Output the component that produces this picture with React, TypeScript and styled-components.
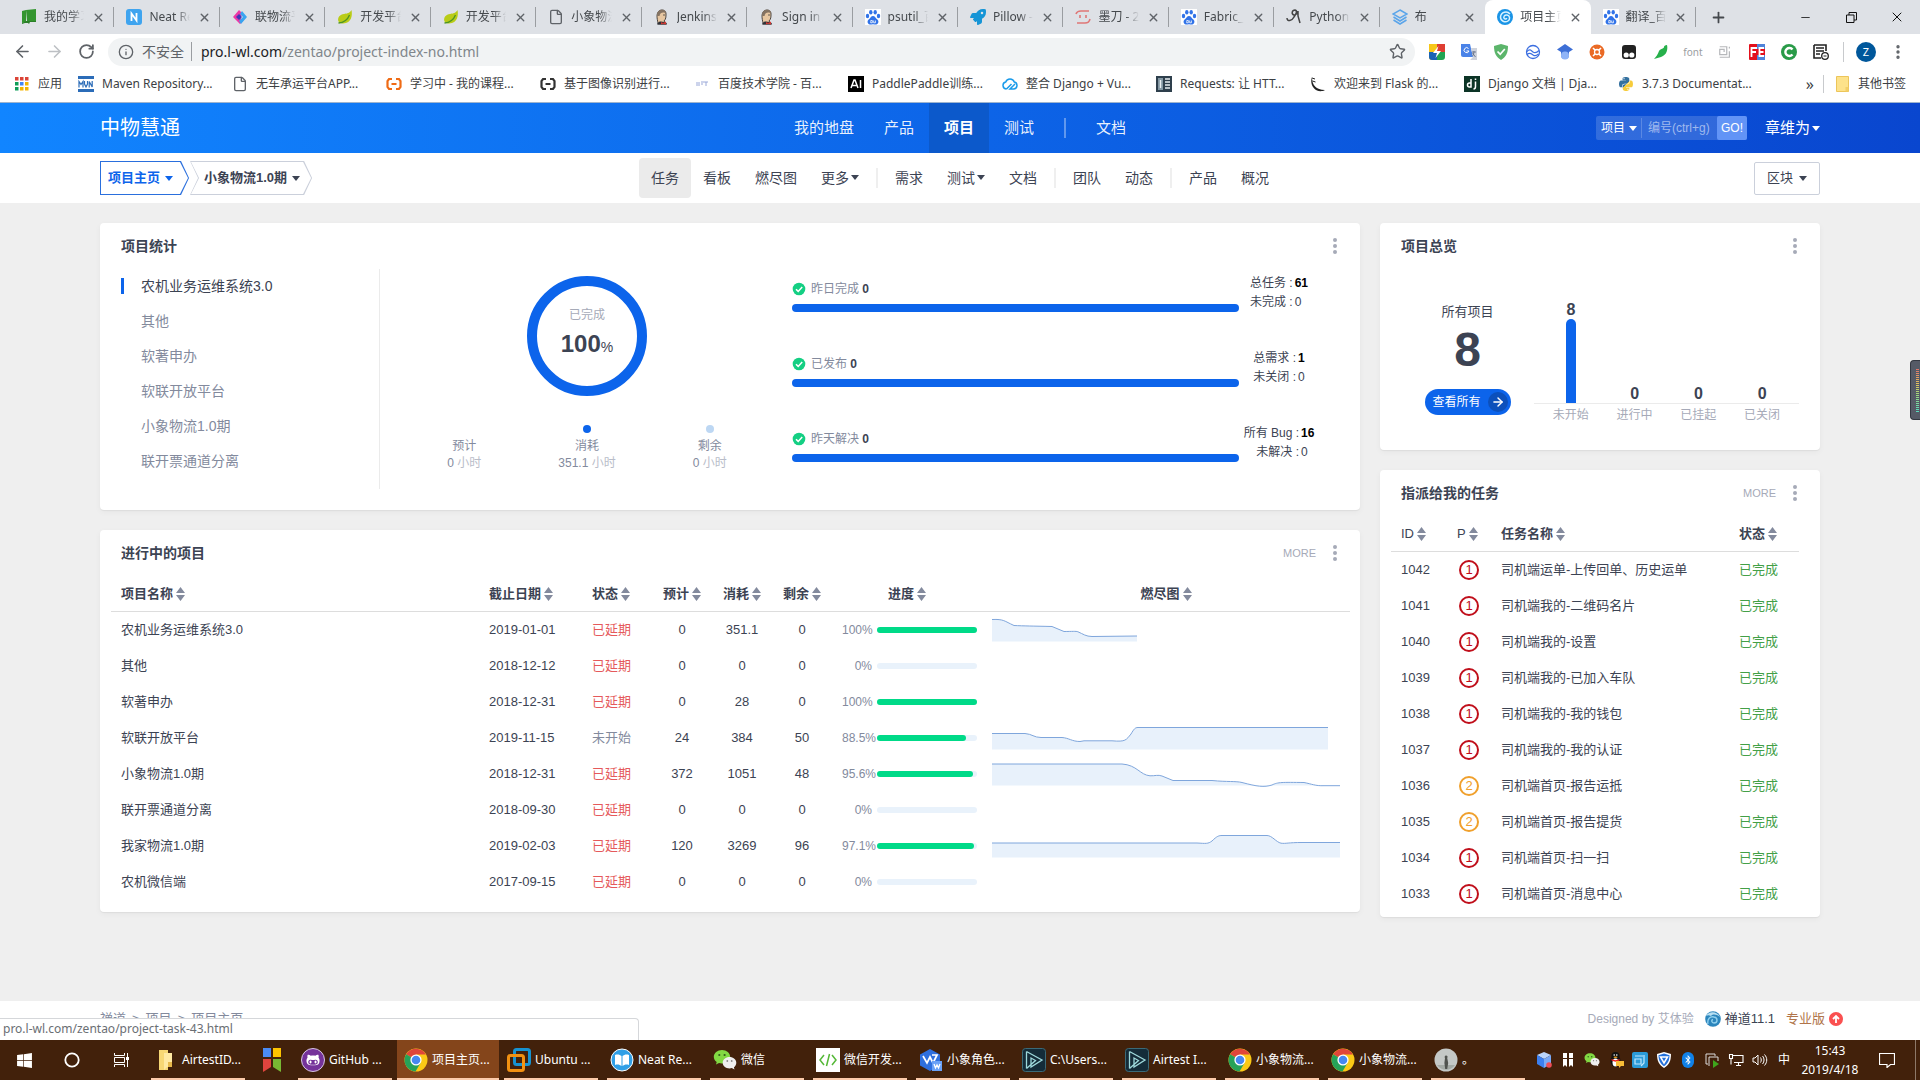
import React from "react";
import styled, { createGlobalStyle, css } from "styled-components";
import { ArrowLeft, ArrowRight, RotateCw, Info, Star, Plus, X, Minus, File, MoreVertical } from "lucide-react";
import { FaWindows, FaPython, FaBluetoothB, FaRocket, FaGithubAlt } from "react-icons/fa";

const uiFont = `"Noto Sans", "Noto Sans CJK SC", sans-serif`;
const pageFont = `"Liberation Sans", "Noto Sans CJK SC", sans-serif`;
const ink = "#3c4353";
const muted = "#838a9d";
const pale = "#a6aab8";
const blue = "#0c64eb";

const Global = createGlobalStyle`
  *, *::before, *::after { box-sizing: border-box; }
  body { margin: 0; background: #efefef; color: ${ink}; font-family: ${pageFont}; font-size: 13px; line-height: 20px; }
  button, input, select { font: inherit; color: inherit; background: none; border: 0; padding: 0; margin: 0; outline: 0; }
  button { cursor: pointer; }
  a { color: inherit; text-decoration: none; }
  svg { display: block; flex: none; }
  ul, h1, h2 { margin: 0; padding: 0; list-style: none; }
`;

const Screen = styled.div`
  min-height: 100vh;
  display: flex;
  flex-direction: column;
`;

/* ---------- browser frame ---------- */
const TabStrip = styled.div`
  display: flex;
  align-items: center;
  height: 34px;
  padding-left: 9px;
  background: #dee1e6;
  font-family: ${uiFont};
  font-size: 12px;
`;
const Tabs = styled.div`
  display: flex;
  flex: 1;
  min-width: 0;
  height: 100%;
`;
const Tab = styled.div<{ $active?: boolean; $line?: boolean }>`
  flex: 1 1 0;
  min-width: 0;
  display: flex;
  align-items: center;
  gap: 7px;
  height: 34px;
  padding: 0 9px 0 12px;
  color: #45494d;
  background: linear-gradient(#9a9da1, #9a9da1) right center / ${(p) => (p.$line ? "1px 20px" : "0 0")} no-repeat;
  ${(p) => p.$active && css`background: #fff; border-radius: 8px 8px 0 0;`}
`;
const TabTitle = styled.button`
  flex: 1;
  min-width: 0;
  overflow: hidden;
  white-space: nowrap;
  text-align: left;
  mask-image: linear-gradient(90deg, #000 65%, transparent 98%);
`;
const IconButton = styled.button`
  display: flex;
  align-items: center;
  justify-content: center;
  color: #5f6368;
`;
const WindowButtons = styled.div`
  display: flex;
  align-items: center;
  width: 224px;
  height: 34px;
  > button { color: #111; width: 46px; height: 34px; }
  > button:first-child { margin-right: 41px; color: #45494d; }
`;
const Toolbar = styled.div`
  display: flex;
  align-items: center;
  height: 35px;
  padding: 0 6px;
  background: #fff;
  font-family: ${uiFont};
  > button { width: 32px; height: 32px; }
`;
const Omnibox = styled.div`
  flex: 1;
  display: flex;
  align-items: center;
  height: 28px;
  margin: 0 6px;
  padding: 0 9px 0 10px;
  border-radius: 14px;
  background: #f1f3f4;
  color: #5f6368;
  font-size: 14px;
`;
const Unsafe = styled.span`
  padding: 0 7px 0 8px;
  margin-right: 9px;
  border-right: 1px solid #9a9da1;
  line-height: 19px;
`;
const Host = styled.label`color: #202124;`;
const PathInput = styled.input`
  flex: 1;
  min-width: 0;
  color: #80868b;
`;
const FontExt = styled.span`
  font-size: 10px;
  color: #9a9da1;
`;
const Rule = styled.span<{ $h: number; $gap?: number }>`
  width: 1px;
  height: ${(p) => p.$h}px;
  margin: 0 ${(p) => p.$gap ?? 0}px;
  background: #c8cacd;
  flex: none;
`;
const Avatar = styled.span`
  display: grid;
  place-items: center;
  width: 20px;
  height: 20px;
  border-radius: 50%;
  background: #00579b;
  color: #fff;
  font-size: 11px;
`;
const Bookmarks = styled.nav`
  display: flex;
  align-items: center;
  height: 34px;
  padding: 0 14px 3px;
  background: #fff;
  border-bottom: 1px solid #9db4cf;
  font-family: ${uiFont};
  font-size: 12px;
  color: #3c4043;
`;
const Bookmark = styled.a<{ $w?: number }>`
  display: flex;
  align-items: center;
  gap: 8px;
  flex: 0 0 ${(p) => (p.$w ? p.$w + "px" : "154px")};
  white-space: nowrap;
`;
const MoreMarks = styled.button`
  margin-left: auto;
  padding-right: 9px;
  font-size: 16px;
`;
const OtherMarks = styled.a`
  display: flex;
  align-items: center;
  gap: 8px;
  padding-left: 12px;
`;

/* ---------- product header ---------- */
const Viewport = styled.div`
  position: relative;
  flex: 1;
  display: flex;
  flex-direction: column;
`;
const Header = styled.header`
  display: grid;
  grid-template-columns: 1fr auto 1fr;
  align-items: center;
  height: 50px;
  padding: 0 100px;
  color: #fff;
  background: linear-gradient(90deg, #1185ff, #0d65e8 50%, #0946cf);
`;
const Logo = styled.h1`
  font-size: 20px;
  font-weight: 400;
  line-height: 28px;
`;
const MainNav = styled.nav`
  display: flex;
  align-items: center;
  font-size: 15px;
`;
const MainLink = styled.a<{ $on?: boolean }>`
  padding: 0 15px;
  line-height: 50px;
  color: rgba(255, 255, 255, 0.92);
  ${(p) => p.$on && css`background: #0c59cb; color: #fff; font-weight: 700;`}
`;
const NavRule = styled.span`
  width: 2px;
  height: 20px;
  margin: 0 15px;
  background: rgba(255, 255, 255, 0.35);
`;
const UserArea = styled.div`
  justify-self: end;
  display: flex;
  align-items: center;
  gap: 18px;
`;
const SearchBox = styled.form`
  display: flex;
  align-items: center;
  height: 24px;
  border-radius: 2px;
  background: rgba(255, 255, 255, 0.16);
  font-size: 12px;
`;
const SelectWrap = styled.label`
  display: flex;
  align-items: center;
  padding: 0 4px 0 5px;
  border-right: 1px solid rgba(255, 255, 255, 0.2);
`;
const Scope = styled.select`
  appearance: none;
  width: 28px;
`;
const NumberInput = styled.input`
  width: 75px;
  padding-left: 6px;
  &::placeholder { color: rgba(255, 255, 255, 0.55); }
`;
const GoButton = styled.button`
  width: 30px;
  height: 24px;
  background: #6294f6;
  border-radius: 2px;
`;
const Caret = styled.i`
  display: inline-block;
  flex: none;
  border: 4px solid transparent;
  border-top: 5px solid currentColor;
  border-bottom: 0;
`;
const UserButton = styled.button`
  display: flex;
  align-items: center;
  gap: 2px;
  font-size: 15px;
`;
const SubHeader = styled.div`
  display: grid;
  grid-template-columns: 1fr auto 1fr;
  align-items: center;
  height: 50px;
  padding: 0 100px;
  background: #fff;
`;
const Crumbs = styled.div`
  display: flex;
  gap: 1px;
`;
const notch = (on?: boolean) =>
  on
    ? "polygon(0 0, calc(100% - 8px) 0, 100% 50%, calc(100% - 8px) 100%, 0 100%)"
    : "polygon(0 0, calc(100% - 8px) 0, 100% 50%, calc(100% - 8px) 100%, 0 100%, 8px 50%)";
const CrumbButton = styled.button<{ $on?: boolean }>`
  position: relative;
  isolation: isolate;
  display: flex;
  align-items: center;
  gap: 5px;
  height: 34px;
  padding: ${(p) => (p.$on ? "0 16px 0 8px" : "0 12px 0 14px")};
  background: ${(p) => (p.$on ? "#2a6fdd" : "#cbd0db")};
  color: ${(p) => (p.$on ? blue : ink)};
  font-weight: 700;
  clip-path: ${(p) => notch(p.$on)};
  &::before {
    content: "";
    position: absolute;
    z-index: -1;
    inset: 1px;
    background: #fff;
    clip-path: ${(p) => notch(p.$on)};
  }
`;
const SubNav = styled.nav`
  display: flex;
  align-items: center;
  font-size: 14px;
`;
const SubLink = styled.a<{ $on?: boolean }>`
  display: flex;
  align-items: center;
  gap: 2px;
  height: 40px;
  padding: 0 12px 1px;
  border-radius: 4px;
  ${(p) => p.$on && css`background: #ebebeb;`}
`;
const SubRule = styled.span`
  width: 2px;
  height: 20px;
  margin: 0 5px;
  background: #efefef;
`;
const BlockButton = styled.button`
  justify-self: end;
  display: flex;
  align-items: center;
  gap: 6px;
  height: 33px;
  padding: 0 12px;
  border: 1px solid #cbd0db;
  border-radius: 2px;
`;

/* ---------- cards ---------- */
const Content = styled.main`
  flex: 1;
  display: grid;
  grid-template-columns: minmax(0, 1fr) 440px;
  align-items: start;
  gap: 20px;
  padding: 20px 100px;
`;
const Column = styled.div`
  display: grid;
  gap: 20px;
`;
const Card = styled.section<{ $bottom: number }>`
  padding-bottom: ${(p) => p.$bottom}px;
  background: #fff;
  border-radius: 4px;
  box-shadow: 0 1px 1px rgba(0, 0, 0, 0.05), 0 2px 6px rgba(0, 0, 0, 0.045);
`;
const CardHead = styled.div`
  display: flex;
  align-items: center;
  height: 46px;
  padding: 0 21px;
`;
const CardTitle = styled.h2`
  flex: 1;
  font-size: 14px;
`;
const MoreLink = styled.a`
  margin-right: 15px;
  font-size: 11px;
  color: ${pale};
`;
const DotsButton = styled.button`
  display: grid;
  gap: 2px;
  width: 8px;
  justify-items: center;
  i { width: 4px; height: 4px; border-radius: 50%; background: ${pale}; }
`;
const StatGrid = styled.div`
  display: grid;
  grid-template-columns: 260px minmax(0, 412fr) minmax(0, 548fr);
  margin: 0 20px;
`;
const ProjectList = styled.ul`
  height: 220px;
  border-right: 1px solid #ebebeb;
`;
const ProjectItem = styled.li<{ $on?: boolean }>`
  display: flex;
  align-items: center;
  height: 35px;
  padding-bottom: 2px;
  font-size: 14px;
  color: ${(p) => (p.$on ? ink : muted)};
  &::before {
    content: "";
    width: 3px;
    height: 16px;
    margin: 0 17px 0 1px;
    background: ${(p) => (p.$on ? blue : "transparent")};
  }
`;
const RingArea = styled.div`
  display: flex;
  flex-direction: column;
  align-items: center;
  padding: 7px 21px 0 23px;
`;
const Ring = styled.div`
  display: flex;
  flex-direction: column;
  align-items: center;
  width: 120px;
  height: 120px;
  padding-top: 20px;
  border: 10px solid ${blue};
  border-radius: 50%;
  font-size: 12px;
  line-height: 18px;
  color: ${pale};
  strong { font-size: 24px; line-height: 40px; color: ${ink}; }
  small { font-size: 14px; font-weight: 400; }
`;
const Legend = styled.div`
  display: grid;
  grid-template-columns: repeat(3, 1fr);
  width: 100%;
  margin-top: 29px;
`;
const LegendItem = styled.div<{ $dot?: string }>`
  display: flex;
  flex-direction: column;
  align-items: center;
  font-size: 12px;
  line-height: 17px;
  color: ${muted};
  &::before {
    content: "";
    width: 8px;
    height: 8px;
    margin-bottom: 5px;
    border-radius: 50%;
    background: ${(p) => p.$dot ?? "transparent"};
  }
  small { font-size: 12px; color: #b9bdc9; }
`;
const Meters = styled.div`
  display: grid;
  align-content: start;
  gap: 37px;
  padding: 5px 21px 0 0;
  font-size: 12px;
`;
const Meter = styled.div`
  display: flex;
  align-items: flex-end;
  height: 38px;
`;
const MeterMain = styled.div`flex: 1;`;
const MeterLabel = styled.div`
  display: flex;
  align-items: center;
  gap: 5px;
  margin-bottom: 6px;
  line-height: 18px;
  color: ${muted};
  b { color: ${ink}; }
`;
const MeterBar = styled.div`
  height: 8px;
  border-radius: 4px;
  background: ${blue};
`;
const Totals = styled.div`
  display: grid;
  grid-template-columns: auto auto;
  justify-content: center;
  column-gap: 2px;
  width: 80px;
  line-height: 19px;
  white-space: nowrap;
  span:nth-child(odd) { text-align: right; }
  b { color: #000; }
`;

/* ---------- tables ---------- */
const Table = styled.table<{ $right: number }>`
  width: calc(100% - ${(p) => p.$right + 11}px);
  margin: 0 ${(p) => p.$right}px 0 11px;
  table-layout: fixed;
  border-collapse: separate;
  border-spacing: 0;
`;
const Th = styled.th<{ $w?: number; $c?: boolean }>`
  width: ${(p) => (p.$w ? p.$w + "px" : "auto")};
  height: 36px;
  padding: 0;
  padding-left: ${(p) => (p.$c ? 0 : 10)}px;
  border-bottom: 1px solid #ddd;
  text-align: ${(p) => (p.$c ? "center" : "left")};
  white-space: nowrap;
`;
const ThButton = styled.button<{ $light?: boolean }>`
  display: inline-flex;
  align-items: center;
  gap: 3px;
  vertical-align: middle;
  font-weight: ${(p) => (p.$light ? 400 : 700)};
`;
const Td = styled.td<{ $c?: boolean; $color?: string }>`
  height: 36px;
  padding: 0;
  padding-left: ${(p) => (p.$c ? 0 : 10)}px;
  text-align: ${(p) => (p.$c ? "center" : "left")};
  color: ${(p) => p.$color ?? ink};
  white-space: nowrap;
`;
const Progress = styled.div`
  display: flex;
  align-items: center;
  gap: 5px;
  font-size: 12px;
  color: ${muted};
  > span { width: 30px; text-align: right; }
`;
const Track = styled.div`
  width: 100px;
  height: 6px;
  border-radius: 3px;
  background: #e9f2fb;
`;
const Fill = styled.div`
  height: 6px;
  border-radius: 3px;
  background: #00da88;
`;
const Priority = styled.span<{ $level: number }>`
  display: grid;
  place-items: center;
  width: 20px;
  height: 20px;
  margin-left: 2px;
  border: 2px solid ${(p) => (p.$level === 1 ? "#c00f1b" : "#f0a02c")};
  border-radius: 50%;
  color: ${(p) => (p.$level === 1 ? "#c00f1b" : "#f0a02c")};
  line-height: 16px;
`;

/* ---------- overview ---------- */
const Overview = styled.div`
  display: flex;
  padding: 30px 21px 0;
`;
const Summary = styled.div`
  display: flex;
  flex-direction: column;
  align-items: center;
  width: 133px;
  padding-top: 3px;
  strong { font-size: 48px; line-height: 56px; margin-bottom: 11px; }
`;
const ViewAll = styled.a`
  display: flex;
  align-items: center;
  justify-content: space-between;
  width: 86px;
  height: 26px;
  padding: 0 3px 0 8px;
  border-radius: 13px;
  background: ${blue};
  color: #fff;
  font-size: 12px;
  span { display: grid; place-items: center; width: 20px; height: 20px; border-radius: 50%; background: #0c50bb; }
`;
const BarChart = styled.div`flex: 1;`;
const Plot = styled.div`
  display: grid;
  grid-template-columns: repeat(4, 1fr);
  height: 105px;
  padding: 0 5px;
  border-bottom: 1px solid #ebebeb;
`;
const BarCell = styled.div`
  display: flex;
  flex-direction: column;
  align-items: center;
  justify-content: flex-end;
  font-size: 16px;
  font-weight: 700;
  line-height: 18px;
`;
const Bar = styled.div`
  width: 10px;
  border-radius: 5px 5px 0 0;
  background: ${blue};
`;
const BarLabels = styled.div`
  display: grid;
  grid-template-columns: repeat(4, 1fr);
  padding: 0 5px;
  font-size: 12px;
  line-height: 22px;
  text-align: center;
  color: ${pale};
`;
const VolumeWidget = styled.div`
  position: absolute;
  right: 0;
  top: 257px;
  width: 10px;
  height: 60px;
  padding: 8px 1px 7px 5px;
  border: 1px solid #343841;
  border-right: 0;
  border-radius: 4px 0 0 4px;
  background: #555a66;
  &::before {
    content: "";
    display: block;
    height: 100%;
    background: repeating-linear-gradient(transparent 0 1px, #555a66 1px 2px), linear-gradient(#e0736b, #e3c35d 35%, #9fda7c 60%, #55dcc0);
  }
`;

/* ---------- footer ---------- */
const Footer = styled.footer`
  display: flex;
  align-items: center;
  justify-content: space-between;
  height: 39px;
  padding: 0 77px 3px 100px;
  background: #fff;
`;
const FootTrail = styled.nav`
  display: flex;
  gap: 6px;
  color: ${muted};
`;
const Credits = styled.div`
  display: flex;
  align-items: center;
  gap: 11px;
  color: ${pale};
  small { font-size: 12px; }
  a { display: flex; align-items: center; gap: 4px; color: ${ink}; }
  a:last-child { color: #b0744a; }
`;
const StatusBubble = styled.div`
  position: absolute;
  left: 0;
  bottom: 0;
  width: 639px;
  height: 22px;
  padding-left: 3px;
  border: 1px solid #d5d7da;
  border-width: 1px 1px 0 0;
  border-radius: 0 4px 0 0;
  background: #fff;
  color: #6a6e73;
  font-family: ${uiFont};
  font-size: 12px;
`;

/* ---------- task bar ---------- */
const Taskbar = styled.div`
  display: flex;
  align-items: center;
  height: 40px;
  background: #42210b;
  color: #fff;
  font-family: ${uiFont};
  font-size: 12px;
`;
const PlainTask = styled.button<{ $w: number }>`
  display: grid;
  place-items: center;
  width: ${(p) => p.$w}px;
  height: 40px;
`;
const TaskButton = styled.button<{ $on?: boolean }>`
  display: flex;
  align-items: center;
  gap: 4px;
  width: 103px;
  height: 40px;
  padding: 0 4px 0 7px;
  overflow: hidden;
  white-space: nowrap;
  background:
    linear-gradient(#fccbab, #fccbab) ${(p) => (p.$on ? "0" : "4px")} bottom / ${(p) => (p.$on ? "102px" : "94px")} 2px no-repeat,
    linear-gradient(#84451b, #84451b) 0 0 / ${(p) => (p.$on ? "102px" : "0")} 100% no-repeat;
`;
const Tray = styled.div`
  display: flex;
  align-items: center;
  margin-left: auto;
`;
const TrayButton = styled.button`
  display: grid;
  place-items: center;
  width: 24px;
  height: 40px;
`;
const Clock = styled.time`
  width: 68px;
  text-align: center;
  line-height: 19px;
`;
const Notify = styled.button`
  display: grid;
  place-items: center;
  width: 46px;
  height: 40px;
`;
const Peek = styled.span`
  width: 5px;
  height: 40px;
  margin-left: 5px;
  border-left: 1px solid #8d7868;
`;

/* ---------- drawings ---------- */
const Svg = ({ s = 16, v = 16, children }: { s?: number; v?: number; children: React.ReactNode }) => (
  <svg width={s} height={s} viewBox={`0 0 ${v} ${v}`} fill="none" aria-hidden="true">{children}</svg>
);
const TwoTone = styled(FaPython)`
  && path { fill: url(#snake); }
`;
const Defs = styled.svg`
  position: absolute;
`;
const Spring = () => <Svg><path d="M14.5 1C15.5 6 15 14 6 14.5c-2 .2-4-.8-4.7-2.4C.4 8.400 3 5.500 7 5c3-.4 6-1 7.500-4Z" fill="#b9cc17" /><path d="M1.500 14c5-.4 9-3 11-8" stroke="#4d9423" strokeWidth="1.300" /></Svg>;
const Jenkins = () => <Svg><path d="M4 14c-1-5-2-9 1-12 3-2 7-1 7 3 0 3 0 5-2 7l2 3H4Z" fill="#e7c6a0" stroke="#3a3430" strokeWidth=".9" /><path d="M3.500 7C2.500 3 5 .6 8 .8c3 0 4.500 2 4.200 4C10 2.500 6 3 5.500 7Z" fill="#857362" /><path d="M3 15.500c1-2.500 2.500-3 4-3l3 .5c2 .3 3 1 3 2.500Z" fill="#2f3138" /><path d="m7 13 2 1 3-1.500v3L9 14.700l-2 .8Z" fill="#d33833" /><circle cx="10" cy="6" r=".7" fill="#333" /></Svg>;
const Baidu = () => <Svg><path d="M0 0h16v16H0z" fill="#fff" /><g fill="#3173e8"><ellipse cx="2.500" cy="7" rx="1.700" ry="2.200" /><ellipse cx="5.800" cy="3.300" rx="1.700" ry="2.300" /><ellipse cx="10.200" cy="3.300" rx="1.700" ry="2.300" /><ellipse cx="13.500" cy="7" rx="1.700" ry="2.200" /><path d="M8 7c2 0 2.600 2.200 4.400 3.600 1.700 1.500 1.200 4.600-1.200 4.900-1.200.1-2-.3-3.200-.3s-2 .4-3.200.3c-2.400-.3-2.900-3.400-1.200-4.900C5.400 9.200 6 7 8 7Z" /></g><path d="M5.500 11.500h1.800v2.300H5.700v-1.600m3-.7v2.300h1.700v-2.300" stroke="#fff" strokeWidth=".8" /></Svg>;
const Chrome = ({ s = 24 }: { s?: number }) => <Svg s={s} v={24}><circle cx="12" cy="12" r="11.500" fill="#fbc916" /><path d="M12 12 2.100 6.200A11.500 11.500 0 0 1 21.900 6.500H12Z" fill="#e0463a" /><path d="M2.100 6.200A11.500 11.500 0 0 0 11.500 23.500l5-8.500-4.500-3Z" fill="#26a259" /><circle cx="12" cy="12" r="5.600" fill="#fff" /><circle cx="12" cy="12" r="4.300" fill="#4688f1" /></Svg>;
const ZenIcon = () => <Svg><circle cx="8" cy="8" r="8" fill="#1a94e6" /><path d="M13 5C10 1.500 4 3 3.500 8c0 4 4.500 6 7.500 4 2.500-1.700 2-5.500-1-6-2.500-.3-4 2-2.700 3.600.8.900 2.200.5 2.400-.6" stroke="#d8f2ff" strokeWidth="1.500" /></Svg>;
const ZenBall = () => <Svg><circle cx="8" cy="8" r="7.800" fill="#2c86bd" /><path d="M1 5C4 0 12 0 15 6c-4-3-7-3-9-1-2-1-3-1-5 0Z" fill="#b9dff1" /><path d="M3 13c-1-5 2-8 6-7 4 .5 4 6 0 6-2.500 0-3-3-1-3.500" stroke="#8fd0ee" strokeWidth="1.400" /></Svg>;
const PageIcon = () => <File size={16} color="#5f6368" strokeWidth={2} />;
const Bracket = ({ c }: { c: string }) => <Svg><path d="M6 3H3L1.500 5v6L3 13h3M10 3h3l1.500 2v6L13 13h-3M5.500 8h5" stroke={c} strokeWidth="2.200" /></Svg>;
const Wechat = ({ s = 24 }: { s?: number }) => <Svg s={s} v={24}><path d="M9 2C4.500 2 .8 5 .8 8.800c0 2.100 1.100 3.900 2.900 5.200L3 16.500l3-1.500c1 .3 2 .4 3 .4 4.500 0 8.200-2.900 8.200-6.600S13.500 2 9 2Z" fill="#82d943" /><path d="M16.500 9c-3.800 0-6.800 2.500-6.800 5.700s3 5.700 6.800 5.700c.8 0 1.600-.1 2.300-.3l2.700 1.400-.6-2.300c1.500-1 2.400-2.700 2.400-4.500C23.300 11.500 20.300 9 16.500 9Z" fill="#efefef" /><g fill="#335c1a"><circle cx="6.300" cy="7" r="1.100" /><circle cx="11.600" cy="7" r="1.100" /></g><g fill="#888"><circle cx="14.300" cy="13" r=".9" /><circle cx="18.700" cy="13" r=".9" /></g></Svg>;
const Airtest = () => <Svg s={24} v={24}><rect x=".5" y=".5" width="23" height="23" rx="3" fill="#142c39" stroke="#3b6a78" /><path d="M4.500 3.500v17M4.500 3.500l15.500 8.500-11 7v-9l4.500 2.500-9 8" stroke="#9ed9dc" strokeWidth="1.300" /></Svg>;
const Folder = () => <Svg s={24} v={24}><path d="M5 2h9v20H5z" fill="#f7d774" /><path d="M10 5h8v14h-5l-3 3z" fill="#ffe9a2" /><path d="M14 14h4v5h-4z" fill="#e6b84b" /></Svg>;
const SortIcon = () => <svg width="9" height="14" viewBox="0 0 9 14" aria-hidden="true"><path d="M0 6 4.500 0 9 6ZM0 8h9l-4.500 6Z" fill={muted} /></svg>;
const Check = () => <svg width="14" height="14" viewBox="0 0 14 14" aria-hidden="true"><circle cx="7" cy="7" r="6.300" fill="#14cf83" /><path d="m4 7.200 2.200 2.200L10.200 5" fill="none" stroke="#fff" strokeWidth="1.500" /></svg>;

const tabs: { t: string; i: React.ReactNode }[] = [
  { t: "我的学习", i: <Svg><path d="m1 2 4-1v12l-4 1zM5 1l10-1v12H6Z" fill="#33952f" /><path d="m1 14 4-2h10v1H9l-1 2-1-1H4l-3 1z" fill="#2b7f28" /></Svg> },
  { t: "Neat Re", i: <Svg><rect width="16" height="16" rx="3" fill="#3fa4ef" /><path d="M5.500 12V4.500l5 7V4" stroke="#fff" strokeWidth="1.800" /></Svg> },
  { t: "联物流平", i: <Svg><path d="m7 1 4 4-3 3 3 4-3 3-7-7Z" fill="#ec38a5" /><path d="m10 2 5 6-6 7-2-3 4-4-3-3Z" fill="#3aa4f0" /><path d="m4 8 3-3 3 3-3 3Z" fill="#4037b8" /></Svg> },
  { t: "开发平台", i: <Spring /> },
  { t: "开发平台", i: <Spring /> },
  { t: "小象物流", i: <PageIcon /> },
  { t: "Jenkins", i: <Jenkins /> },
  { t: "Sign in [", i: <Jenkins /> },
  { t: "psutil_百", i: <Baidu /> },
  { t: "Pillow - P", i: <FaRocket size={16} color="#1695d6" /> },
  { t: "墨刀 - 2", i: <Svg><path d="M1 5c1-3 3-3 5-3h8M15 10c-1 4-3 4-5 4H2" stroke="#df7777" strokeWidth="1.600" /><path d="M5 6v3M11 6v3" stroke="#df7777" strokeWidth="1.600" /></Svg> },
  { t: "Fabric_百", i: <Baidu /> },
  { t: "Python l", i: <Svg><path d="M1 9c0 4 5 3 7-1 2-3 4-6 1-7-3 0-4 4-1 5 2 0 4-2 4-4v5l2 7" stroke="#444" strokeWidth="1.500" /></Svg> },
  { t: "布", i: <Svg><path d="m8 1 7 4-7 4-7-4ZM1.500 8 8 12l6.500-4M1.500 11 8 15l6.500-4" stroke="#5ba5ea" strokeWidth="1.500" /></Svg> },
  { t: "项目主页", i: <ZenIcon /> },
  { t: "翻译_百", i: <Baidu /> },
];

const extensions: React.ReactNode[] = [
  <Svg><path d="M0 0h8v16H3a3 3 0 0 1-3-3z" fill="#f7c719" /><path d="M8 0h8v8H8z" fill="#df3e32" /><path d="M0 8h8v8H3a3 3 0 0 1-3-3z" fill="#1a63b5" /><path d="M8 8h8v5a3 3 0 0 1-3 3H8z" fill="#21a453" /><path d="M9.500 2 4 9h4l-1.500 5L12 7H8Z" fill="#fff" /></Svg>,
  <Svg><path d="M0 0h9l3 13H2a2 2 0 0 1-2-2z" fill="#4a83e8" /><path d="M10 4h6v12H9l3-3z" fill="#cfd3dc" /><path d="M7.500 4.500A2.500 2.500 0 1 0 8 7H5.500" stroke="#fff" /><path d="M11 8h4M13 7c0 3-1 4-1.500 5m0-3 3 4" stroke="#5b6780" strokeWidth=".8" /></Svg>,
  <Svg><path d="m8 0 7 2c0 7-2 11-7 14C3 13 1 9 1 2Z" fill="#5cb56b" /><path d="m4.500 7.500 2.700 2.700L11.800 5" stroke="#fff" strokeWidth="1.700" /></Svg>,
  <Svg><circle cx="8" cy="8" r="6.500" stroke="#3b6ee0" strokeWidth="1.300" /><path d="M2 7.500C5 4 6.500 7 8 8s3.500 1 6-1.500M2 10.500C5 8 6.500 10 8 11s3.500 1 5-1" stroke="#3b6ee0" strokeWidth="1.200" /></Svg>,
  <Svg><path d="m8 0 8 5.500L12 8v3a4 4 0 0 1-8 0V8L0 5.500Z" fill="#3d6fd6" /><circle cx="8" cy="11.500" r="4" fill="#8fb4f7" /></Svg>,
  <Svg><circle cx="8" cy="8" r="7.500" fill="#ea6a25" /><circle cx="8" cy="8" r="2.500" stroke="#fff" strokeWidth="1.300" /><path d="m4 4 2 2m4 4 2 2m0-8-2 2m-4 4-2 2" stroke="#fff" strokeWidth="1.600" /></Svg>,
  <Svg><rect x="1" y="1" width="14" height="14" rx="3" fill="#222" /><circle cx="5.200" cy="11" r="2.600" fill="#fff" /><circle cx="10.800" cy="11" r="2.600" fill="#fff" /></Svg>,
  <Svg><path d="M14 1c1 4 0 10-6 12l-7 2c2-2 4-5 5-8 2-3 5-2 5-4 0-1 1-2 3-2Z" fill="#27b04b" /></Svg>,
  <FontExt>font</FontExt>,
  <Svg s={14}><path d="M2 2h8v9H2V5h5v3M13 2v2m0 3v7H2" stroke="#b6b8bb" strokeWidth="1.400" /></Svg>,
  <Svg><rect width="16" height="16" rx="1" fill="#e3101c" /><path d="M8 0h8v5H8zM8 11h8v5H8z" fill="#4f83d9" /><path d="M2.500 13V4H8M2.500 8H7M15 4h-4.500v8H15m-4.500-4h4" stroke="#fff" strokeWidth="1.800" /></Svg>,
  <Svg><circle cx="8" cy="8" r="8" fill="#299b48" /><path d="M11.500 5.500a4 4 0 1 0 0 5" stroke="#fff" strokeWidth="2.400" /></Svg>,
  <Svg><path d="M1 1h12v6M1 1v13h7M3 4h8M3 7h8M3 10h4" stroke="#222" strokeWidth="1.600" /><circle cx="12" cy="12" r="3.300" stroke="#222" strokeWidth="1.300" /><path d="M10.500 12h3" stroke="#222" /></Svg>,
];

const bookmarks: { t: string; i: React.ReactNode }[] = [
  { t: "Maven Repository...", i: <Svg><path d="M0 0h16v3H0zM0 13h16v3H0z" fill="#2b6cb8" /><path d="M1 11.500v-6l2 3 2-3v6M6.500 5v3l1.500 3 1.500-3V5m1.700 6.500V5.500l3 5.500V5" stroke="#2b6cb8" strokeWidth="1.200" /></Svg> },
  { t: "无车承运平台APP...", i: <PageIcon /> },
  { t: "学习中 - 我的课程...", i: <Bracket c="#ef6b15" /> },
  { t: "基于图像识别进行...", i: <Bracket c="#333" /> },
  { t: "百度技术学院 - 百...", i: <Svg><path d="M3 6v4M5 6v4M7 6h3M7 8h2M12 6v4M10 6h4" stroke="#9aa8d8" /></Svg> },
  { t: "PaddlePaddle训练...", i: <Svg><path d="M0 0h16v16H0z" fill="#000" /><path d="m3 12 3-8h1l3 8M4 9.500h5M12.500 4v8" stroke="#fff" strokeWidth="1.500" /></Svg> },
  { t: "整合 Django + Vu...", i: <Svg><path d="M4.500 13a3.500 3.500 0 0 1-.8-6.900 4.500 4.500 0 0 1 8.600 0 3.500 3.500 0 0 1-.8 6.900H8l5-5M4.500 13l5-5" stroke="#1a9bea" strokeWidth="1.500" /></Svg> },
  { t: "Requests: 让 HTT...", i: <Svg><path d="M0 0h16v16H0z" fill="#2e3f4c" /><path d="M2 2h5v12H2z" fill="#8397a3" /><path d="M9 3h5M9 6h5M9 9h5M9 12h5M4.500 4v8" stroke="#e8eef1" strokeWidth="1.400" /></Svg> },
  { t: "欢迎来到 Flask 的...", i: <Svg><path d="M2 1c0 8 4 13 13 13-2 1.500-6 1.500-8 .5C2 12 0 6 2 1Z" fill="#222" /><path d="m2 2 3 1M2.500 5l3 1" stroke="#222" /></Svg> },
  { t: "Django 文档 | Dja...", i: <Svg><path d="M0 0h16v16H0z" fill="#0c3426" /><path d="M7 3v8H5.500a2 2 0 1 1 0-4H7M11.500 5.500v5c0 2-1 2.500-2 2.500M11.500 2.500V4" stroke="#fff" strokeWidth="1.500" /></Svg> },
  { t: "3.7.3 Documentat...", i: <TwoTone size={16} /> },
];

const projects = [
  { n: "农机业务运维系统3.0", d: "2019-01-01", late: true, e: "0", c: "351.1", l: "0", p: 100, w: 145, y: "M0 7.500C12 7 12 9 22 13.500C32 14 40 14 60 14.500L72 19.500C80 19.500 84 19 86 19.800C91 22 94 24.500 100 24.500L145 24" },
  { n: "其他", d: "2018-12-12", late: true, e: "0", c: "0", l: "0", p: 0 },
  { n: "软著申办", d: "2018-12-31", late: true, e: "0", c: "28", l: "0", p: 100 },
  { n: "软联开放平台", d: "2019-11-15", late: false, e: "24", c: "384", l: "50", p: 88.5, w: 336, y: "M0 13.500H33C40 14 42 17.500 49 17.500H70C77 18 80 21.500 88 21.500L92 20.800H120C134 22 134 20 139 14C142 9 143 7.500 146 7.500H336" },
  { n: "小象物流1.0期", d: "2018-12-31", late: true, e: "372", c: "1051", l: "48", p: 95.6, w: 348, y: "M0 8H130C145 9 148 19 158 19.800C163 20 166 18.500 170 20L181 24.500H220C235 26 244 25 250 26.500C265 30.500 272 31.500 280 29C286 26 290 26.300 312 26.500C320 28 323 30 332 29.700H348" },
  { n: "联开票通道分离", d: "2018-09-30", late: true, e: "0", c: "0", l: "0", p: 0 },
  { n: "我家物流1.0期", d: "2019-02-03", late: true, e: "120", c: "3269", l: "96", p: 97.1, w: 348, y: "M0 15H205C214 15.500 216 16 220 13C225 8 227 7.500 230 7.500H275C280 7.500 284 14 289 15.200C294 15.800 296 14.500 310 14.500H348" },
  { n: "农机微信端", d: "2017-09-15", late: true, e: "0", c: "0", l: "0", p: 0 },
];

const tasks: [number, number, string][] = [
  [1042, 1, "司机端运单-上传回单、历史运单"],
  [1041, 1, "司机端我的-二维码名片"],
  [1040, 1, "司机端我的-设置"],
  [1039, 1, "司机端我的-已加入车队"],
  [1038, 1, "司机端我的-我的钱包"],
  [1037, 1, "司机端我的-我的认证"],
  [1036, 2, "司机端首页-报告运抵"],
  [1035, 2, "司机端首页-报告提货"],
  [1034, 1, "司机端首页-扫一扫"],
  [1033, 1, "司机端首页-消息中心"],
];

const meters = [
  { k: "昨日完成", a: "总任务 :", av: "61", b: "未完成 :" },
  { k: "已发布", a: "总需求 :", av: "1", b: "未关闭 :" },
  { k: "昨天解决", a: "所有 Bug :", av: "16", b: "未解决 :" },
];

const overview = [
  { label: "未开始", value: 8 },
  { label: "进行中", value: 0 },
  { label: "已挂起", value: 0 },
  { label: "已关闭", value: 0 },
];

const running: { t: string; i: React.ReactNode; on?: boolean }[] = [
  { t: "GitHub ...", i: <Svg s={24} v={24}><circle cx="12" cy="12" r="11.500" fill="#75329a" stroke="#d7c7e2" /><g transform="translate(5 5)"><FaGithubAlt size={14} color="#fff" /></g></Svg> },
  { t: "项目主页...", i: <Chrome />, on: true },
  { t: "Ubuntu ...", i: <Svg s={24} v={24}><rect x="7.500" y="1.500" width="15" height="15" rx="2" stroke="#1793d1" strokeWidth="3" /><rect x="1.500" y="7.500" width="15" height="15" rx="2" stroke="#f29111" strokeWidth="3" /></Svg> },
  { t: "Neat Re...", i: <Svg s={24} v={24}><circle cx="12" cy="12" r="11" fill="#2f9fe6" stroke="#fff" /><path d="M5 7c3-1 5 0 6.500 1v10C10 17 8 16 5 17Zm14 0c-3-1-5 0-6.500 1v10c1.500-1 3.500-2 6.500-1Z" fill="#fff" /></Svg> },
  { t: "微信", i: <Wechat /> },
  { t: "微信开发...", i: <Svg s={24} v={24}><path d="M0 0h24v24H0z" fill="#fff" /><path d="m8 7-4 5 4 5m8-10 4 5-4 5m-2.500-11-3 12" stroke="#55b837" strokeWidth="1.500" /></Svg> },
  { t: "小象角色...", i: <Svg s={24} v={24}><path d="m11 1 10 5.500v11L11 23 1 17.500v-11Z" fill="#2e6fde" /><path d="m4 8 4 7 3-6 3 6 4-8h-5" stroke="#fff" strokeWidth="1.700" /><path d="M13 13h10v10H13z" fill="#6aa1f7" /><path d="m15 16 1.500 4 1.500-3 1.500 3 1.500-4" stroke="#fff" strokeWidth="1.300" /></Svg> },
  { t: "C:\\Users...", i: <Airtest /> },
  { t: "Airtest I...", i: <Airtest /> },
  { t: "小象物流...", i: <Chrome /> },
  { t: "小象物流...", i: <Chrome /> },
  { t: "。", i: <Svg s={24} v={24}><circle cx="12" cy="12" r="11.500" fill="#c4c8c6" /><path d="M3 17h18a11 11 0 0 1-18 0Z" fill="#a4aaa5" /><path d="M12 7.500a1.500 1.500 0 0 1 1.200 2.500l1 5-1 6h-2l-.8-6 .6-5A1.500 1.500 0 0 1 12 7.500Z" fill="#50534f" /></Svg> },
];

const tray: React.ReactNode[] = [
  <Svg><path d="m8 0 7 3-7 4-7-4Z" fill="#bcd5fa" /><path d="m1 3 7 4v9l-7-4Z" fill="#3c7ff0" /><path d="m15 3-7 4v9l7-4Z" fill="#7aa9f6" /><circle cx="13" cy="13" r="2.800" fill="#ef4d56" /></Svg>,
  <Svg><path d="M3 1h4v5H3zM9 1h4v5H9zM3 7h4v8l-2-2-2 2zM9 7h4v8l-2-2-2 2z" fill="#fff" /></Svg>,
  <Wechat s={16} />,
  <Svg><ellipse cx="7.500" cy="9" rx="5" ry="6" fill="#111" /><circle cx="7.500" cy="4" r="4" fill="#111" /><ellipse cx="7.500" cy="10.500" rx="3" ry="4" fill="#fff" /><path d="M3.500 7c3 1.500 5 1.500 8 0v1.500c-3 1.500-5 1.500-8 0Z" fill="#e22" /><ellipse cx="7.500" cy="5.200" rx="2" ry=".8" fill="#f6a21b" /><path d="M8 9h8v5h-3l-2 2v-2H8z" fill="#f8bd37" /><circle cx="6.200" cy="3" r=".8" fill="#fff" /><circle cx="8.800" cy="3" r=".8" fill="#fff" /></Svg>,
  <Svg><rect width="16" height="16" rx="2" fill="#2b9bd7" /><path d="M3 4h8M3 7h6v5H3zM12 3v8l-3 3" stroke="#bfe8ff" strokeWidth="1.200" /></Svg>,
  <Svg><path d="m8 0 7 2c0 7-2 11-7 14C3 13 1 9 1 2Z" fill="#fff" /><path d="m8 1.500 5.500 1.700C13.500 8 12 11.500 8 14.200 4 11.500 2.500 8 2.500 3.200Z" fill="#2370db" /><path d="M4.500 5h7L8 11Z" stroke="#fff" strokeWidth="1.500" /></Svg>,
  <Svg><rect x="2" width="12" height="16" rx="6" fill="#1081e8" /><g transform="translate(3 3)"><FaBluetoothB size={10} color="#fff" /></g></Svg>,
  <Svg><path d="M4 12H2V2h9v2M5 14V5h9v4" stroke="#ddd" /><path d="m9 8 6 4-6 4Z" fill="#3fa51c" /></Svg>,
  <Svg><path d="M5 3.500h10v7H6M8 13.500h5M10.500 10.500v3M1.500 2.500h3v4h-3zM3 6.500v6" stroke="#fff" strokeWidth="1.100" /></Svg>,
  <Svg><path d="M1 6h2l3-3v10l-3-3H1ZM8.500 5.500c1 1.500 1 3.500 0 5M10.500 4c2 2.500 2 5.500 0 8M12.500 2.500c3 3.500 3 7.500 0 11" stroke="#fff" /></Svg>,
  <span>中</span>,
];

const SortHead = ({ w, c, light, children }: { w?: number; c?: boolean; light?: boolean; children: React.ReactNode }) => (
  <Th $w={w} $c={c} scope="col"><ThButton $light={light}>{children}<SortIcon /></ThButton></Th>
);
const Dots = () => <DotsButton aria-label="菜单"><i /><i /><i /></DotsButton>;

export default function App() {
  return (
    <Screen>
      <Global />
      <Defs width="0" height="0" aria-hidden="true">
        <defs>
          <linearGradient id="snake" x1="0" y1="0" x2="1" y2="1">
            <stop offset=".5" stopColor="#35719f" />
            <stop offset=".5" stopColor="#f7cc3c" />
          </linearGradient>
        </defs>
      </Defs>

      <TabStrip>
        <Tabs>
          {tabs.map((tab, i) => (
            <Tab key={i} $active={i === 14} $line={i !== 13 && i !== 14}>
              {tab.i}
              <TabTitle>{tab.t}</TabTitle>
              <IconButton aria-label="关闭"><X size={13} strokeWidth={2.5} /></IconButton>
            </Tab>
          ))}
        </Tabs>
        <WindowButtons>
          <IconButton aria-label="新标签页"><Plus size={17} strokeWidth={2.5} /></IconButton>
          <IconButton aria-label="最小化"><Minus size={13} strokeWidth={1.5} /></IconButton>
          <IconButton aria-label="还原"><Svg s={11} v={11}><path d="M.5 3h7.500v7.500H.5zM3 3V.5h7.500V8H8" stroke="#111" /></Svg></IconButton>
          <IconButton aria-label="关闭窗口"><X size={16} strokeWidth={1.5} /></IconButton>
        </WindowButtons>
      </TabStrip>
      <Toolbar>
        <IconButton aria-label="后退"><ArrowLeft size={19} /></IconButton>
        <IconButton aria-label="前进"><ArrowRight size={19} color="#bdc0c4" /></IconButton>
        <IconButton aria-label="刷新"><RotateCw size={17} strokeWidth={2.5} /></IconButton>
        <Omnibox>
          <Info size={16} />
          <Unsafe>不安全</Unsafe>
          <Host htmlFor="address">pro.l-wl.com</Host>
          <PathInput id="address" defaultValue="/zentao/project-index-no.html" />
          <IconButton aria-label="收藏"><Star size={17} /></IconButton>
        </Omnibox>
        {extensions.map((e, i) => <IconButton key={i} aria-label="扩展程序">{e}</IconButton>)}
        <Rule $h={20} $gap={6} />
        <IconButton aria-label="用户"><Avatar>Z</Avatar></IconButton>
        <IconButton aria-label="更多"><MoreVertical size={18} strokeWidth={2.5} /></IconButton>
      </Toolbar>
      <Bookmarks>
        <Bookmark href="#" $w={64}>
          <Svg>{[0, 1, 2].flatMap((r) => [0, 1, 2].map((c) => <path key={`${r}${c}`} d={`M${1 + c * 5} ${1 + r * 5}h3.500v3.500h-3.500z`} fill={[["#db4437", "#db4437", "#db4437"], ["#0f9d58", "#4285f4", "#f4b400"], ["#0f9d58", "#f4b400", "#f4b400"]][r][c]} />))}</Svg>
          应用
        </Bookmark>
        {bookmarks.map((b) => <Bookmark href="#" key={b.t}>{b.i}<span>{b.t}</span></Bookmark>)}
        <MoreMarks aria-label="更多书签">»</MoreMarks>
        <Rule $h={18} />
        <OtherMarks href="#"><svg width="14" height="16" viewBox="0 0 14 16" aria-hidden="true"><path d="M.5.500h12v15H.5z" fill="#fde28a" stroke="#ecc55a" /><path d="M9.500 11h3v4.500h-3z" fill="#f3cf67" /></svg>其他书签</OtherMarks>
      </Bookmarks>

      <Viewport>
        <Header>
          <Logo>中物慧通</Logo>
          <MainNav>
            <MainLink href="#">我的地盘</MainLink>
            <MainLink href="#">产品</MainLink>
            <MainLink href="#" $on>项目</MainLink>
            <MainLink href="#">测试</MainLink>
            <NavRule />
            <MainLink href="#">文档</MainLink>
          </MainNav>
          <UserArea>
            <SearchBox onSubmit={(e) => e.preventDefault()}>
              <SelectWrap><Scope aria-label="搜索范围"><option>项目</option></Scope><Caret /></SelectWrap>
              <NumberInput aria-label="编号" placeholder="编号(ctrl+g)" />
              <GoButton>GO!</GoButton>
            </SearchBox>
            <UserButton>章维为<Caret /></UserButton>
          </UserArea>
        </Header>
        <SubHeader>
          <Crumbs>
            <CrumbButton $on>项目主页 <Caret /></CrumbButton>
            <CrumbButton>小象物流1.0期<Caret /></CrumbButton>
          </Crumbs>
          <SubNav>
            <SubLink href="#" $on>任务</SubLink>
            <SubLink href="#">看板</SubLink>
            <SubLink href="#">燃尽图</SubLink>
            <SubLink href="#">更多<Caret /></SubLink>
            <SubRule />
            <SubLink href="#">需求</SubLink>
            <SubLink href="#">测试<Caret /></SubLink>
            <SubLink href="#">文档</SubLink>
            <SubRule />
            <SubLink href="#">团队</SubLink>
            <SubLink href="#">动态</SubLink>
            <SubRule />
            <SubLink href="#">产品</SubLink>
            <SubLink href="#">概况</SubLink>
          </SubNav>
          <BlockButton>区块<Caret /></BlockButton>
        </SubHeader>

        <Content>
          <Column>
            <Card $bottom={21}>
              <CardHead><CardTitle>项目统计</CardTitle><Dots /></CardHead>
              <StatGrid>
                <ProjectList>
                  {["农机业务运维系统3.0", "其他", "软著申办", "软联开放平台", "小象物流1.0期", "联开票通道分离"].map((n, i) => (
                    <ProjectItem key={n} $on={i === 0}><a href="#">{n}</a></ProjectItem>
                  ))}
                </ProjectList>
                <RingArea>
                  <Ring>已完成<strong>100<small>%</small></strong></Ring>
                  <Legend>
                    <LegendItem>预计<span>0 <small>小时</small></span></LegendItem>
                    <LegendItem $dot={blue}>消耗<span>351.1 <small>小时</small></span></LegendItem>
                    <LegendItem $dot="#bdd7f3">剩余<span>0 <small>小时</small></span></LegendItem>
                  </Legend>
                </RingArea>
                <Meters>
                  {meters.map((m) => (
                    <Meter key={m.k}>
                      <MeterMain>
                        <MeterLabel><Check /><span>{m.k} <b>0</b></span></MeterLabel>
                        <MeterBar />
                      </MeterMain>
                      <Totals>
                        <span>{m.a}</span><b>{m.av}</b>
                        <span>{m.b}</span><span>0</span>
                      </Totals>
                    </Meter>
                  ))}
                </Meters>
              </StatGrid>
            </Card>

            <Card $bottom={12}>
              <CardHead><CardTitle>进行中的项目</CardTitle><MoreLink href="#">MORE</MoreLink><Dots /></CardHead>
              <Table $right={10}>
                <thead>
                  <tr>
                    <SortHead>项目名称</SortHead>
                    <SortHead w={103}>截止日期</SortHead>
                    <SortHead w={70}>状态</SortHead>
                    <SortHead w={60} c>预计</SortHead>
                    <SortHead w={60} c>消耗</SortHead>
                    <SortHead w={60} c>剩余</SortHead>
                    <SortHead w={150} c>进度</SortHead>
                    <SortHead w={368} c>燃尽图</SortHead>
                  </tr>
                </thead>
                <tbody>
                  {projects.map((p) => (
                    <tr key={p.n}>
                      <Td><a href="#">{p.n}</a></Td>
                      <Td>{p.d}</Td>
                      <Td $color={p.late ? "#e5595b" : muted}>{p.late ? "已延期" : "未开始"}</Td>
                      <Td $c>{p.e}</Td>
                      <Td $c>{p.c}</Td>
                      <Td $c>{p.l}</Td>
                      <Td><Progress><span>{p.p}%</span><Track><Fill style={{ width: `${p.p}%` }} /></Track></Progress></Td>
                      <Td>
                        {p.y && (
                          <svg width="350" height="36" viewBox="0 0 350 36" role="img" aria-label="燃尽图">
                            <path d={`${p.y}V29.500H0Z`} fill="#e8f1fb" />
                            <path d={p.y} fill="none" stroke="#7fa6dc" />
                          </svg>
                        )}
                      </Td>
                    </tr>
                  ))}
                </tbody>
              </Table>
            </Card>
          </Column>

          <Column>
            <Card $bottom={24}>
              <CardHead><CardTitle>项目总览</CardTitle><Dots /></CardHead>
              <Overview>
                <Summary>
                  所有项目
                  <strong>8</strong>
                  <ViewAll href="#">查看所有<span><ArrowRight size={14} strokeWidth={2.5} /></span></ViewAll>
                </Summary>
                <BarChart>
                  <Plot>
                    {overview.map((o) => (
                      <BarCell key={o.label}>{o.value}<Bar style={{ height: (o.value / 8) * 84 }} /></BarCell>
                    ))}
                  </Plot>
                  <BarLabels>
                    {overview.map((o) => <span key={o.label}>{o.label}</span>)}
                  </BarLabels>
                </BarChart>
              </Overview>
            </Card>
            <Card $bottom={5}>
              <CardHead><CardTitle>指派给我的任务</CardTitle><MoreLink href="#">MORE</MoreLink><Dots /></CardHead>
              <Table $right={21}>
                <thead>
                  <tr>
                    <SortHead w={56} light>ID</SortHead>
                    <SortHead w={44} light>P</SortHead>
                    <SortHead>任务名称</SortHead>
                    <SortHead w={70}>状态</SortHead>
                  </tr>
                </thead>
                <tbody>
                  {tasks.map(([id, level, name]) => (
                    <tr key={id}>
                      <Td>{id}</Td>
                      <Td><Priority $level={level}>{level}</Priority></Td>
                      <Td><a href="#">{name}</a></Td>
                      <Td $color="#43a047">已完成</Td>
                    </tr>
                  ))}
                </tbody>
              </Table>
            </Card>
          </Column>
        </Content>

        <Footer>
          <FootTrail><a href="#">禅道</a><span>&gt;</span><a href="#">项目</a><span>&gt;</span><a href="#">项目主页</a></FootTrail>
          <Credits>
            <small>Designed by 艾体验</small>
            <a href="#"><ZenBall />禅道11.1</a>
            <a href="#">专业版<Svg s={14} v={14}><circle cx="7" cy="7" r="7" fill="#fa5050" /><path d="M7 11V4M4 7l3-3 3 3" stroke="#fff" strokeWidth="1.800" /></Svg></a>
          </Credits>
        </Footer>
        <StatusBubble>pro.l-wl.com/zentao/project-task-43.html</StatusBubble>
        <VolumeWidget />
      </Viewport>

      <Taskbar>
        <PlainTask $w={48} aria-label="开始"><FaWindows size={17} /></PlainTask>
        <PlainTask $w={48} aria-label="Cortana"><Svg><circle cx="8" cy="8" r="6.700" stroke="#fff" strokeWidth="1.800" /></Svg></PlainTask>
        <PlainTask $w={51} aria-label="任务视图"><Svg><path d="M.5 1v2.500h10V1M.5 15v-2.500h10V15M.5 5.500h10v5H.5zM13.500 1v14" stroke="#fff" /><path d="M12 5h3v3h-3z" fill="#fff" /></Svg></PlainTask>
        <TaskButton><Folder />AirtestID...</TaskButton>
        <PlainTask $w={44} aria-label="书签"><svg width="18" height="24" viewBox="0 0 18 24"><path d="M0 0h8v9H0z" fill="#4b8bf4" /><path d="M10 0h8v9h-8z" fill="#fdc300" /><path d="M0 11h8v8l-8 5z" fill="#e0443e" /><path d="M10 11h8v13l-8-5z" fill="#78b833" /></svg></PlainTask>
        {running.map((r, i) => <TaskButton key={i} $on={r.on}>{r.i}{r.t}</TaskButton>)}
        <Tray>
          {tray.map((t, i) => <TrayButton key={i} aria-label="托盘">{t}</TrayButton>)}
          <Clock>15:43<br />2019/4/18</Clock>
          <Notify aria-label="通知"><Svg><path d="M.5 1.500h15v11h-4L8 15.500v-3H.5Z" stroke="#fff" strokeWidth="1.200" /></Svg></Notify>
          <Peek />
        </Tray>
      </Taskbar>
    </Screen>
  );
}
